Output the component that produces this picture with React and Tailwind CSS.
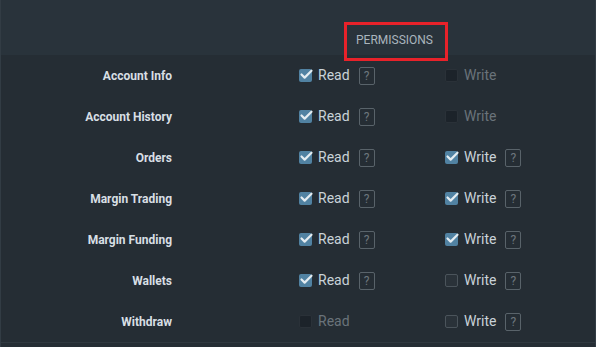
import { Check } from 'lucide-react';

const rows = [
  { label: 'Account Info', read: 'on', readHelp: true, write: 'disabled', writeHelp: false },
  { label: 'Account History', read: 'on', readHelp: true, write: 'disabled', writeHelp: false },
  { label: 'Orders', read: 'on', readHelp: true, write: 'on', writeHelp: true },
  { label: 'Margin Trading', read: 'on', readHelp: true, write: 'on', writeHelp: true },
  { label: 'Margin Funding', read: 'on', readHelp: true, write: 'on', writeHelp: true },
  { label: 'Wallets', read: 'on', readHelp: true, write: 'off', writeHelp: true },
  { label: 'Withdraw', read: 'disabled', readHelp: false, write: 'off', writeHelp: true },
];

const Box = ({ state }) => {
  if (state === 'on') {
    return (
      <span className="relative h-[13px] w-[13px] rounded-[2px] bg-[#5182a2]">
        <Check size={15} strokeWidth={3.5} className="absolute -top-[2px] left-0 text-[#e4ecf1]" />
      </span>
    );
  }
  if (state === 'off') {
    return <span className="h-[13px] w-[13px] rounded-[2px] border border-[#4b545b] bg-[#2a3239]" />;
  }
  return <span className="h-[13px] w-[13px] rounded-[2px] border border-[#2a3138] bg-[#1c232a]" />;
};

const Help = () => (
  <span className="ml-[9px] flex h-[18px] w-[16px] items-center justify-center rounded-[2px] border border-[#59636a] text-[12px] text-[#6c767d]">
    ?
  </span>
);

const Perm = ({ state, text, help }) => (
  <div className="flex items-center">
    <Box state={state} />
    <span className={`ml-[6px] text-[14px] ${state === 'disabled' ? 'text-[#6a737a]' : 'text-[#c9d2d8]'}`}>{text}</span>
    {help && <Help />}
  </div>
);

export default function App() {
  return (
    <div className="relative h-[347px] w-[596px] overflow-hidden border-x border-[#323c44] bg-[#252d34] font-['Roboto',sans-serif]">
      <div className="flex h-[55px] items-end bg-[#29333b] pb-[6px]">
        <span className="ml-[355px] text-[12px] text-[#aab5bd]">PERMISSIONS</span>
      </div>
      <div className="absolute left-[343px] top-[22px] h-[39px] w-[104px] border-[3px] border-[#e8222a]" />
      <div className="border-b border-[#2f383f]">
        {rows.map((r) => (
          <div key={r.label} className="grid h-[41px] grid-cols-[171px_146px_1fr] items-center">
            <span className="text-right text-[12px] font-bold text-[#d8dfe4]">{r.label}</span>
            <div className="ml-[127px] w-max">
              <Perm state={r.read} text="Read" help={r.readHelp} />
            </div>
            <div className="ml-[127px]">
              <Perm state={r.write} text="Write" help={r.writeHelp} />
            </div>
          </div>
        ))}
      </div>
    </div>
  );
}
